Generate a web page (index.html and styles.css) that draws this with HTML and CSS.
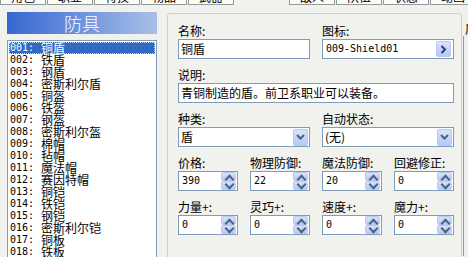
FILE: index.html
```
<!DOCTYPE html>
<html lang="zh-CN">
<head>
  <meta charset="utf-8">
  <title>数据库 - 防具</title>
  <link rel="stylesheet" href="styles.css">
</head>
<body>
  <div class="tabs">
    <div class="tab"><span>角色</span></div>
    <div class="tab"><span>职业</span></div>
    <div class="tab"><span>特技</span></div>
    <div class="tab"><span>物品</span></div>
    <div class="tab"><span>武器</span></div>
    <div class="tab active"><span>防具</span></div>
    <div class="tab"><span>敌人</span></div>
    <div class="tab"><span>队伍</span></div>
    <div class="tab"><span>状态</span></div>
    <div class="tab"><span>动画</span></div>
  </div>

  <div class="main">
    <div class="left">
      <div class="title">防具</div>
      <ul class="list">
        <li class="sel"><span class="num">001:</span>铜盾</li>
        <li><span class="num">002:</span>铁盾</li>
        <li><span class="num">003:</span>钢盾</li>
        <li><span class="num">004:</span>密斯利尔盾</li>
        <li><span class="num">005:</span>铜盔</li>
        <li><span class="num">006:</span>铁盔</li>
        <li><span class="num">007:</span>钢盔</li>
        <li><span class="num">008:</span>密斯利尔盔</li>
        <li><span class="num">009:</span>棉帽</li>
        <li><span class="num">010:</span>毡帽</li>
        <li><span class="num">011:</span>魔法帽</li>
        <li><span class="num">012:</span>赛因特帽</li>
        <li><span class="num">013:</span>铜铠</li>
        <li><span class="num">014:</span>铁铠</li>
        <li><span class="num">015:</span>钢铠</li>
        <li><span class="num">016:</span>密斯利尔铠</li>
        <li><span class="num">017:</span>铜板</li>
        <li><span class="num">018:</span>铁板</li>
      </ul>
    </div>

    <div class="group">
      <div class="fields">
        <div class="field w2">
          <div class="lbl">名称:</div>
          <div class="box"><span class="txt">铜盾</span></div>
        </div>
        <div class="field w2">
          <div class="lbl">图标:</div>
          <div class="box">
            <span class="txt mono">009-Shield01</span>
            <span class="btn pick">
              <svg width="7" height="9" viewBox="0 0 7 9"><path d="M1.5 1 L5 4.5 L1.5 8" fill="none" stroke="#2c3f78" stroke-width="2"/></svg>
            </span>
          </div>
        </div>

        <div class="field w4">
          <div class="lbl">说明:</div>
          <div class="box"><span class="txt">青铜制造的盾。前卫系职业可以装备。</span></div>
        </div>

        <div class="field w2">
          <div class="lbl">种类:</div>
          <div class="box">
            <span class="txt">盾</span>
            <span class="btn drop">
              <svg width="9" height="6" viewBox="0 0 9 6"><path d="M1 1 L4.5 4.5 L8 1" fill="none" stroke="#4d6185" stroke-width="2"/></svg>
            </span>
          </div>
        </div>
        <div class="field w2">
          <div class="lbl">自动状态:</div>
          <div class="box">
            <span class="txt">(无)</span>
            <span class="btn drop">
              <svg width="9" height="6" viewBox="0 0 9 6"><path d="M1 1 L4.5 4.5 L8 1" fill="none" stroke="#4d6185" stroke-width="2"/></svg>
            </span>
          </div>
        </div>

        <div class="field">
          <div class="lbl">价格:</div>
          <div class="box"><span class="txt num-val">390</span><span class="spin"><i class="up"></i><i class="down"></i></span></div>
        </div>
        <div class="field">
          <div class="lbl">物理防御:</div>
          <div class="box"><span class="txt num-val">22</span><span class="spin"><i class="up"></i><i class="down"></i></span></div>
        </div>
        <div class="field">
          <div class="lbl">魔法防御:</div>
          <div class="box"><span class="txt num-val">20</span><span class="spin"><i class="up"></i><i class="down"></i></span></div>
        </div>
        <div class="field">
          <div class="lbl">回避修正:</div>
          <div class="box"><span class="txt num-val">0</span><span class="spin"><i class="up"></i><i class="down"></i></span></div>
        </div>

        <div class="field">
          <div class="lbl">力量+:</div>
          <div class="box"><span class="txt num-val">0</span><span class="spin"><i class="up"></i><i class="down"></i></span></div>
        </div>
        <div class="field">
          <div class="lbl">灵巧+:</div>
          <div class="box"><span class="txt num-val">0</span><span class="spin"><i class="up"></i><i class="down"></i></span></div>
        </div>
        <div class="field">
          <div class="lbl">速度+:</div>
          <div class="box"><span class="txt num-val">0</span><span class="spin"><i class="up"></i><i class="down"></i></span></div>
        </div>
        <div class="field">
          <div class="lbl">魔力+:</div>
          <div class="box"><span class="txt num-val">0</span><span class="spin"><i class="up"></i><i class="down"></i></span></div>
        </div>
      </div>
    </div>

    <div class="extra">
      <div class="lbl">属性:</div>
      <div class="extra-box"></div>
    </div>
  </div>
</body>
</html>
```

FILE: styles.css
```
*{
  box-sizing: border-box;
}
body{
  margin: 0;
  width: 468px;
  height: 257px;
  overflow: hidden;
  background: #f1f1ed;
  color: #000;
  font-family: "Noto Sans CJK SC", sans-serif;
  font-size: 12px;
}

/* tab strip, mostly scrolled off the top */
.tabs{
  display: flex;
  height: 5px;
  overflow: hidden;
}
.tab{
  flex: 0 0 46px;
  margin-right: 1px;
  height: 5px;
  border: 1px solid #919b9c;
  border-top: none;
  background: #fbfbf8;
  text-align: center;
  overflow: hidden;
}
.tab span{
  display: block;
  margin-top: -9px;
  line-height: 12px;
}
.tab.active{
  flex: 0 0 53px;
  border: none;
  background: transparent;
  color: transparent;
}

.main{
  display: flex;
  height: 252px;
  overflow: hidden;
  padding: 7px 0 0 7px;
}

/* left list */
.left{
  flex: 0 0 150px;
}
.title{
  height: 22px;
  line-height: 22px;
  text-align: center;
  color: #fff;
  font-size: 18px;
  font-weight: 300;
  background: linear-gradient(to right, #3468d0, #a9bfe9);
}
.list{
  list-style: none;
  margin: 6px 0 0;
  padding: 1px;
  height: 220px;
  border: 1px solid #7f9db9;
  border-bottom: none;
  background: #fff;
  overflow: hidden;
}
.list li{
  display: flex;
  align-items: center;
  height: 12px;
  line-height: 12px;
  padding-left: 1px;
  white-space: nowrap;
  overflow: hidden;
}
.list li.sel{
  background: #316ac5;
  color: #fff;
  outline: 1px dotted #c9d7f0;
  outline-offset: -1px;
}
.num{
  flex: 0 0 31px;
  line-height: 12px;
  font-family: "DejaVu Sans Mono", monospace;
  font-size: 10px;
}

/* group box with the item fields */
.group{
  flex: 0 0 295px;
  margin: 1px 0 0 10px;
  height: 250px;
  border: 1px solid #d0d0bf;
  border-radius: 3px;
  padding: 12px 0 0 10px;
}
.fields{
  display: grid;
  grid-template-columns: repeat(4, 60px);
  column-gap: 12px;
  row-gap: 11px;
}
.field.w2{
  grid-column: span 2;
}
.field.w4{
  grid-column: span 4;
}
.lbl{
  height: 13px;
  line-height: 10px;
  white-space: nowrap;
}
.box{
  display: flex;
  align-items: center;
  height: 20px;
  border: 1px solid #7f9db9;
  background: #fff;
}
.txt{
  flex: 1;
  padding-left: 2px;
  line-height: 18px;
  white-space: nowrap;
  overflow: hidden;
}
.mono,
.num-val{
  font-family: "DejaVu Sans Mono", monospace;
  font-size: 10px;
  padding-left: 3px;
}

/* xp style little buttons */
.btn{
  display: flex;
  align-items: center;
  justify-content: center;
  width: 15px;
  border: 1px solid #b9c9ef;
  border-radius: 2px;
  background: linear-gradient(#d6e2fd, #b6c9f6);
}
.btn.pick{
  height: 16px;
  margin-right: 2px;
}
.btn.drop{
  height: 17px;
  margin-right: 1px;
}
.spin{
  display: flex;
  flex-direction: column;
  width: 15px;
  height: 18px;
  margin-right: 1px;
}
.spin i{
  flex: 1;
  position: relative;
  border: 1px solid #b9c9ef;
  border-radius: 2px;
  background: linear-gradient(#d6e2fd, #b6c9f6);
}
.spin i::after{
  content: "";
  position: absolute;
  left: 4px;
  width: 5px;
  height: 5px;
  border-left: 2px solid #4d6185;
  border-top: 2px solid #4d6185;
}
.spin .up::after{
  top: 3px;
  transform: rotate(45deg);
}
.spin .down::after{
  top: -1px;
  transform: rotate(225deg);
}

/* start of the next column, cut by the window edge */
.extra{
  flex: 0 0 40px;
  margin: 12px 0 0 1px;
  overflow: hidden;
}
.extra .lbl{
  padding-left: 2px;
}
.extra-box{
  margin-top: -1px;
  height: 220px;
  border-left: 1px solid #7f9db9;
}
```
